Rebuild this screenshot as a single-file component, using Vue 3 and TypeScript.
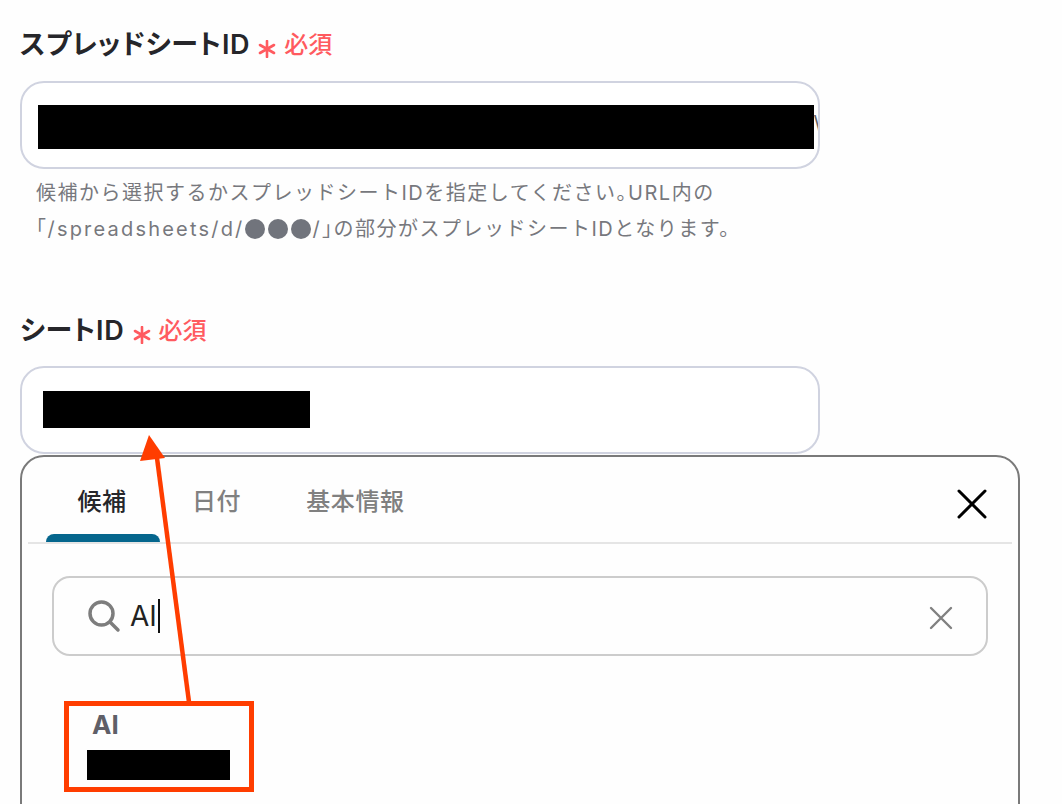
<script setup lang="ts">
const tabs: string[] = ['候補', '日付', '基本情報']
</script>

<template>
  <main class="page">
    <section class="field first">
      <h2 class="label"><span class="label-text">スプレッドシートID</span>
        <svg class="star" width="18" height="18" viewBox="0 0 18 18"><path d="M9 1 V17 M2 5 L16 13 M16 5 L2 13" stroke="#ff5a5f" stroke-width="2.6" stroke-linecap="round" fill="none" /></svg>
        <span class="req">必須</span></h2>
      <div class="input wide">
        <div class="mask m1"></div>
        <span class="sliver">\</span>
      </div>
      <p class="help">候補から選択するかスプレッドシートIDを指定してください<span class="halt">。</span>URL内の<br /><span class="halt">「</span><span class="path">/spreadsheets/d/</span><span class="dots"><i></i><i></i><i></i></span><span class="path">/</span><span class="halt">」</span>の部分がスプレッドシートIDとなります。</p>
    </section>

    <section class="field second">
      <h2 class="label"><span class="label-text">シートID</span>
        <svg class="star" width="18" height="18" viewBox="0 0 18 18"><path d="M9 1 V17 M2 5 L16 13 M16 5 L2 13" stroke="#ff5a5f" stroke-width="2.6" stroke-linecap="round" fill="none" /></svg>
        <span class="req">必須</span></h2>
      <div class="input short">
        <div class="mask m2"></div>
      </div>
    </section>

    <section class="panel">
      <div class="tabs">
        <div v-for="(t, i) in tabs" :key="t" class="tab" :class="{ active: i === 0 }">{{ t }}</div>
        <svg class="close" width="32" height="32" viewBox="0 0 32 32">
          <path d="M3 3 L29 29 M29 3 L3 29" stroke="#000" stroke-width="3" stroke-linecap="round" fill="none" />
        </svg>
      </div>
      <div class="search">
        <svg class="glass" width="34" height="34" viewBox="0 0 34 34">
          <circle cx="14.5" cy="14.5" r="11.5" stroke="#7d7d7d" stroke-width="3.5" fill="none" />
          <path d="M23 23 L31 31" stroke="#7d7d7d" stroke-width="3.5" stroke-linecap="round" />
        </svg>
        <span class="query">AI</span><span class="caret"></span>
        <svg class="clear" width="24" height="24" viewBox="0 0 24 24">
          <path d="M2 2 L22 22 M22 2 L2 22" stroke="#808080" stroke-width="2.4" stroke-linecap="round" fill="none" />
        </svg>
      </div>
      <div class="result">
        <div class="result-title">AI</div>
        <div class="mask m3"></div>
      </div>
    </section>

    <div class="redbox"></div>
    <svg class="arrow" width="1062" height="804" viewBox="0 0 1062 804">
      <path d="M189 702 L157 458" stroke="#ff3d00" stroke-width="4.5" fill="none" />
      <path d="M149 435 L140 461 L165 458 Z" fill="#ff3d00" />
    </svg>
  </main>
</template>

<style>
html, body { margin: 0; background: #fefefe; }
</style>

<style scoped>
.page {
  position: relative;
  width: 1062px;
  height: 804px;
  overflow: hidden;
  background: #fefefe;
  font-family: Inter, "Noto Sans CJK JP", sans-serif;
  box-sizing: border-box;
  padding-left: 20px;
}
.field.first { padding-top: 26px; }
.field.second { padding-top: 65px; }
.label {
  margin: 0;
  height: 38px;
  line-height: 38px;
  font-size: 26px;
  font-weight: 600;
  color: #26262a;
  white-space: nowrap;
  display: flex;
  align-items: center;
}
.label-text { font-size: 27px; letter-spacing: 0.75px; font-feature-settings: "palt"; }
.star {
  margin-left: 8px;
  flex: none;
  position: relative;
  top: 4px;
}
.req {
  color: #ff5a5f;
  font-size: 24px;
  font-weight: 500;
  margin-left: 8px;
}
.input {
  box-sizing: border-box;
  width: 800px;
  height: 88px;
  margin-top: 17px;
  border: 2px solid #d0d3e0;
  border-radius: 24px;
  background: #fff;
  position: relative;
  display: flex;
  align-items: flex-start;
  overflow: hidden;
}
.second .input { margin-top: 16px; }
.mask { background: #000; }
.m1 { width: 776px; height: 44px; margin: 22px 0 0 16px; flex: none; }
.m2 { width: 267px; height: 37px; margin: 23px 0 0 21px; flex: none; }
.sliver { font-size: 22px; line-height: 30px; margin-top: 26px; color: #666; font-family: "Liberation Sans", sans-serif; }
.help {
  margin: 6px 0 0 16px;
  font-size: 20px;
  line-height: 36px;
  letter-spacing: 1.5px;
  color: #77787d;
  white-space: nowrap;
}
.halt { font-feature-settings: "halt"; }
.path { letter-spacing: 2.2px; }
.dots { display: inline-flex; gap: 3px; vertical-align: -3px; margin-right: 2px; }
.dots i {
  width: 20px;
  height: 20px;
  border-radius: 50%;
  background: #71747c;
  display: block;
}
.short { margin-bottom: 1px; }
.panel {
  box-sizing: border-box;
  width: 1000px;
  height: 420px;
  border: 2px solid #7a7a7a;
  border-radius: 24px;
  background: #fefefe;
  padding: 0 6px;
}
.tabs {
  height: 87px;
  border-bottom: 2px solid #e5e5e5;
  display: flex;
  position: relative;
  padding-left: 18px;
  box-sizing: border-box;
}
.tab {
  position: relative;
  padding-top: 27px;
  line-height: 36px;
  font-size: 24px;
  font-weight: 500;
  letter-spacing: 0.6px;
  color: #808080;
  margin-right: 65px;
  white-space: nowrap;
}
.tab.active {
  color: #26262a;
  width: 114px;
  box-sizing: border-box;
  padding-right: 2px;
  text-align: center;
  margin-right: 32px;
}
.tab.active::after {
  content: "";
  position: absolute;
  left: 0;
  right: 0;
  bottom: 0;
  height: 8px;
  background: #05668d;
  border-radius: 8px 8px 0 0;
}
.close { position: absolute; right: 24px; top: 31px; }
.search {
  box-sizing: border-box;
  height: 80px;
  width: 936px;
  margin: 32px 0 0 24px;
  border: 2px solid #cccccc;
  border-radius: 18px;
  display: flex;
  align-items: center;
  padding-left: 33px;
  position: relative;
}
.glass { flex: none; margin-top: -1px; }
.query { margin-left: 9px; font-size: 28px; color: #222; line-height: 36px; }
.caret { width: 2px; height: 34px; background: #111; margin-left: 1px; }
.clear { position: absolute; right: 33px; top: 28px; }
.result { margin: 52px 0 0 59px; }
.result-title {
  margin-left: 5px;
  font-size: 26px;
  line-height: 34px;
  font-weight: 700;
  color: #5f5f68;
}
.m3 { width: 143px; height: 30px; margin-top: 8px; }
.redbox {
  position: absolute;
  left: 64px;
  top: 701px;
  width: 190px;
  height: 91px;
  box-sizing: border-box;
  border: 5px solid #ff3d00;
}
.arrow { position: absolute; left: 0; top: 0; pointer-events: none; }
</style>
